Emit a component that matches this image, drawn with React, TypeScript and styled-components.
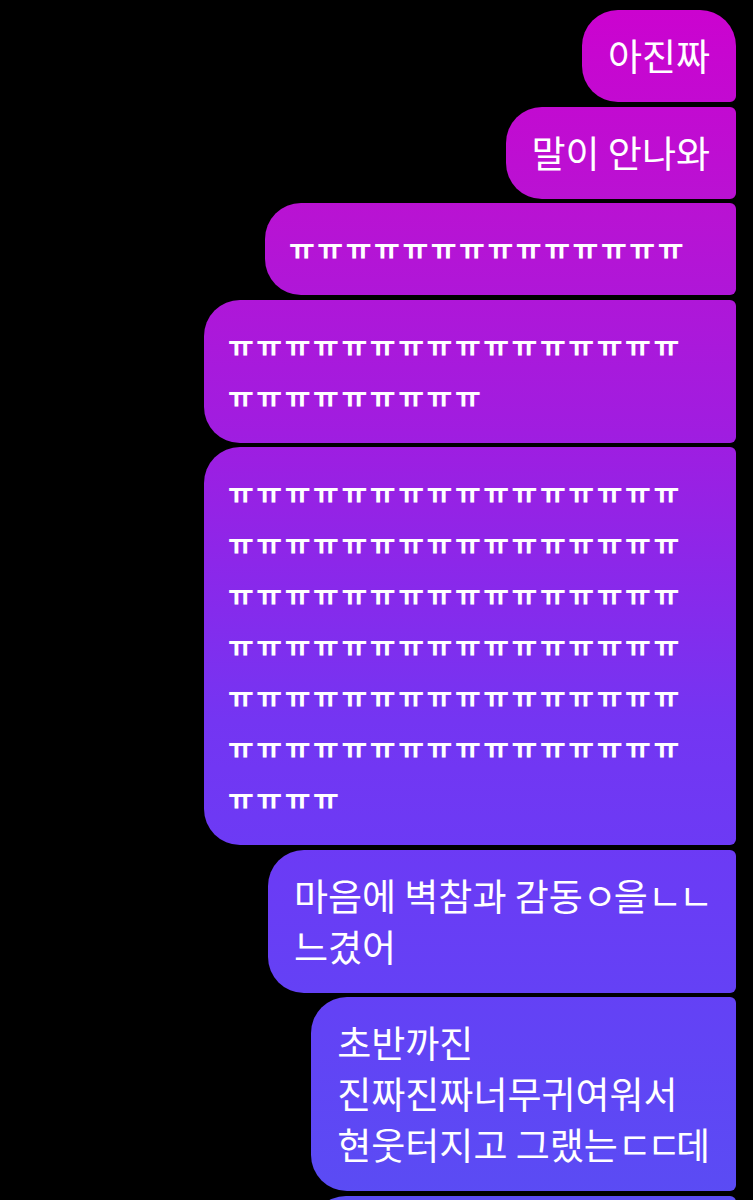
import React from "react";
import styled, { createGlobalStyle, css } from "styled-components";

const GlobalStyle = createGlobalStyle`
  html, body {
    margin: 0;
    padding: 0;
    background: #000;
  }
  body {
    font-family: "Noto Sans CJK KR", "Noto Sans", sans-serif;
    -webkit-font-smoothing: antialiased;
  }
`;

const Screen = styled.main`
  width: 753px;
  height: 1200px;
  overflow: hidden;
  background: #000;
  box-sizing: border-box;
  padding: 10px 17px 0 0;
  display: flex;
  flex-direction: column;
  align-items: flex-end;
  gap: 4.5px;
`;

type BubbleProps = {
  $first?: boolean;
  $weep?: boolean;
};

const Bubble = styled.div<BubbleProps>`
  box-sizing: border-box;
  max-width: 532px;
  padding: 20px 26px 21px 26px;
  border-radius: 36px 6px 6px 36px;
  background: linear-gradient(
    180deg,
    #cc02cf 0%,
    #b813d3 18%,
    #a01de0 36%,
    #8a28ea 48%,
    #7435f2 60%,
    #6b3bf5 72%,
    #6243f5 86%,
    #5a4cf4 100%
  );
  background-attachment: fixed;
  background-size: 753px 1200px;
  color: #fff;
  font-size: 37px;
  line-height: 51px;
  font-weight: 400;
  white-space: pre-line;
  word-break: break-all;

  ${(p) =>
    p.$first &&
    css`
      border-top-right-radius: 36px;
    `}

  ${(p) =>
    p.$weep &&
    css`
      padding-left: 24px;
      padding-right: 50px;
      font-size: 28px;
      font-weight: 700;
      letter-spacing: 2.6px;
    `}
`;

const Jamo = styled.span<{ $squeeze: number }>`
  letter-spacing: ${(p) => -p.$squeeze}px;
`;

const weep = (n: number) => "ㅠ".repeat(n);

export default function App() {
  return (
    <>
      <GlobalStyle />
      <Screen>
        <Bubble $first>아진짜</Bubble>
        <Bubble>말이 안나와</Bubble>
        <Bubble $weep>{weep(14)}</Bubble>
        <Bubble $weep>{weep(25)}</Bubble>
        <Bubble $weep>{weep(100)}</Bubble>
        <Bubble>
          마음에 벽참과 감동<Jamo $squeeze={3}>ㅇ</Jamo>을
          <Jamo $squeeze={3}>ㄴㄴ</Jamo>
          {"\n"}느겼어
        </Bubble>
        <Bubble>
          {"초반까진\n진짜진짜너무귀여워서\n현웃터지고 그랬는"}
          <Jamo $squeeze={5}>ㄷㄷ</Jamo>데
        </Bubble>
        <Bubble>ㅋㅋㅋㅋㅋㅋㅋㅋㅋㅋㅋ</Bubble>
      </Screen>
    </>
  );
}
